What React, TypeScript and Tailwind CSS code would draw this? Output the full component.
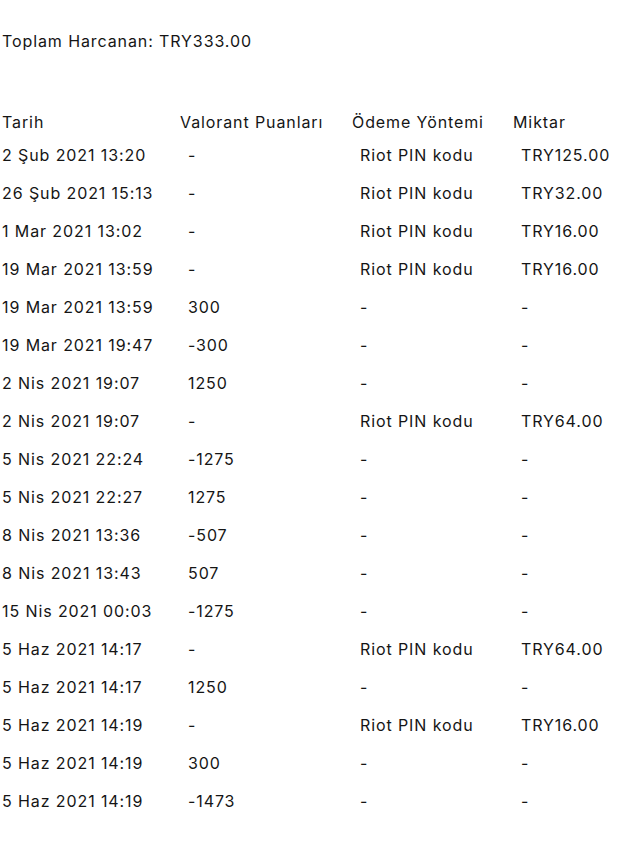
const rows: [string, string, string, string][] = [
  ["2 Şub 2021 13:20", "-", "Riot PIN kodu", "TRY125.00"],
  ["26 Şub 2021 15:13", "-", "Riot PIN kodu", "TRY32.00"],
  ["1 Mar 2021 13:02", "-", "Riot PIN kodu", "TRY16.00"],
  ["19 Mar 2021 13:59", "-", "Riot PIN kodu", "TRY16.00"],
  ["19 Mar 2021 13:59", "300", "-", "-"],
  ["19 Mar 2021 19:47", "-300", "-", "-"],
  ["2 Nis 2021 19:07", "1250", "-", "-"],
  ["2 Nis 2021 19:07", "-", "Riot PIN kodu", "TRY64.00"],
  ["5 Nis 2021 22:24", "-1275", "-", "-"],
  ["5 Nis 2021 22:27", "1275", "-", "-"],
  ["8 Nis 2021 13:36", "-507", "-", "-"],
  ["8 Nis 2021 13:43", "507", "-", "-"],
  ["15 Nis 2021 00:03", "-1275", "-", "-"],
  ["5 Haz 2021 14:17", "-", "Riot PIN kodu", "TRY64.00"],
  ["5 Haz 2021 14:17", "1250", "-", "-"],
  ["5 Haz 2021 14:19", "-", "Riot PIN kodu", "TRY16.00"],
  ["5 Haz 2021 14:19", "300", "-", "-"],
  ["5 Haz 2021 14:19", "-1473", "-", "-"],
]

export default function App() {
  return (
    <div className="min-h-[851px] bg-white pl-[2px] pt-[29px] text-[16px] tracking-[0.9px] text-[#151515] font-['Inter',sans-serif]">
      <div className="h-6 leading-6">Toplam Harcanan: TRY333.00</div>
      <div className="mt-[55px]">
        <div className="grid h-[28px] grid-cols-[178px_172px_161px_1fr] items-center whitespace-nowrap">
          <div>Tarih</div>
          <div>Valorant Puanları</div>
          <div>Ödeme Yöntemi</div>
          <div>Miktar</div>
        </div>
        {rows.map((r, i) => (
          <div key={i} className="grid h-[38px] grid-cols-[178px_172px_161px_1fr] items-center whitespace-nowrap">
            <div>{r[0]}</div>
            <div className="pl-2">{r[1]}</div>
            <div className="pl-2">{r[2]}</div>
            <div className="pl-2">{r[3]}</div>
          </div>
        ))}
      </div>
    </div>
  )
}
